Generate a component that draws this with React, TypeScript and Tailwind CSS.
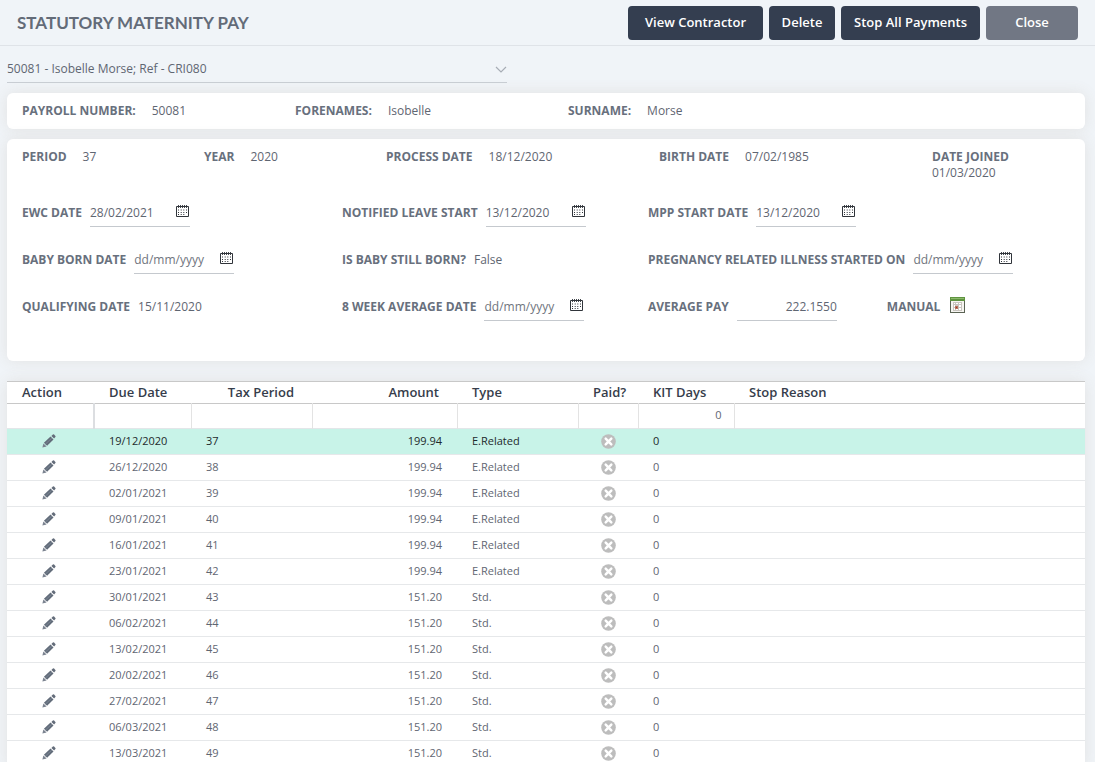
import React, { useState } from 'react';

interface Payment {
  due: string;
  period: number;
  amount: string;
  type: string;
}

const payments: Payment[] = [
  { due: '19/12/2020', period: 37, amount: '199.94', type: 'E.Related' },
  { due: '26/12/2020', period: 38, amount: '199.94', type: 'E.Related' },
  { due: '02/01/2021', period: 39, amount: '199.94', type: 'E.Related' },
  { due: '09/01/2021', period: 40, amount: '199.94', type: 'E.Related' },
  { due: '16/01/2021', period: 41, amount: '199.94', type: 'E.Related' },
  { due: '23/01/2021', period: 42, amount: '199.94', type: 'E.Related' },
  { due: '30/01/2021', period: 43, amount: '151.20', type: 'Std.' },
  { due: '06/02/2021', period: 44, amount: '151.20', type: 'Std.' },
  { due: '13/02/2021', period: 45, amount: '151.20', type: 'Std.' },
  { due: '20/02/2021', period: 46, amount: '151.20', type: 'Std.' },
  { due: '27/02/2021', period: 47, amount: '151.20', type: 'Std.' },
  { due: '06/03/2021', period: 48, amount: '151.20', type: 'Std.' },
  { due: '13/03/2021', period: 49, amount: '151.20', type: 'Std.' },
];

const labelClass = 'text-[12px] leading-4 font-bold whitespace-nowrap text-[#68707d]';
const cardShadow = 'shadow-[0_0_15px_#e2e2e2]';

const CalendarIcon: React.FC = () => (
  <svg width="14" height="13" viewBox="0 0 14 13" aria-hidden="true">
    <path d="M0.5 1.5h12v10h-12z" fill="none" stroke="#30343a" />
    <path d="M2.5 0v3M4.5 0v3M6.5 0v3M8.5 0v3M10.5 0v3" stroke="#30343a" strokeWidth="0.9" />
    <path
      d="M2 4.5h1v1h-1zM4.7 4.5h1v1h-1zM7.3 4.5h1v1h-1zM10 4.5h1v1h-1zM2 7h1v1h-1zM4.7 7h1v1h-1zM7.3 7h1v1h-1zM10 7h1v1h-1zM2 9h1v1h-1zM4.7 9h1v1h-1zM7.3 9h1v1h-1z"
      fill="#30343a"
    />
  </svg>
);

const ManualIcon: React.FC = () => (
  <svg width="15" height="16" viewBox="0 0 15 16" shapeRendering="crispEdges" aria-hidden="true">
    <path d="M0 0h15v16h-15z" fill="#5b6354" />
    <path d="M1 4h13v11h-13z" fill="#f6f5f1" />
    <path d="M0 0h15v4h-15z" fill="#5f9440" />
    <path d="M1 1h13v1h-13z" fill="#8dbb6c" />
    <path d="M3 5h9v9h-9z" fill="#c9c5bf" />
    <path d="M4 6h1v1h-1zM6 6h2v1h-2zM9 6h2v1h-2zM4 8h1v2h-1zM9 8h2v2h-2zM4 11h1v2h-1zM6 11h2v2h-2zM9 11h2v2h-2z" fill="#fff" />
    <path d="M5 9h3v3h-3z" fill="#b9705c" />
    <path d="M6 10h1v1h-1z" fill="#a13a24" />
  </svg>
);

const PencilIcon: React.FC = () => (
  <svg width="14" height="14" viewBox="0 0 14 14" aria-hidden="true">
    <path d="M0.4 13.6l1-4.2 3.2 3.2z" fill="#7b8390" />
    <path d="M1.9 8.7l6.6-6.1 3 3-6.4 6.2z" fill="#626c7a" />
    <path d="M9.4 1.9l1.5-1.3q.6-.5 1.2 0l1.3 1.3q.5.6 0 1.2l-1.3 1.5z" fill="#626b79" />
    <path d="M3.2 10.3l6.6-6.2" stroke="#818b99" strokeWidth="0.8" />
  </svg>
);

const CrossIcon: React.FC = () => (
  <svg width="15" height="15" viewBox="0 0 15 15" role="img" aria-label="No">
    <circle cx="7.5" cy="7.5" r="7.3" fill="#bdbdbd" />
    <path d="M4.7 4.7l5.6 5.6M10.3 4.7l-5.6 5.6" stroke="#fff" strokeWidth="2.5" strokeLinecap="round" />
  </svg>
);

interface ValueProps {
  label: string;
  value: string;
  gap?: string;
}

const Value: React.FC<ValueProps> = ({ label, value, gap = 'gap-x-2' }) => (
  <dl className={`flex flex-wrap items-start ${gap}`}>
    <dt className={labelClass}>{label}</dt>
    <dd className="leading-4">{value}</dd>
  </dl>
);

interface DateFieldProps {
  id: string;
  label: string;
  initial?: string;
}

const DateField: React.FC<DateFieldProps> = ({ id, label, initial = '' }) => {
  const [value, setValue] = useState(initial);

  return (
    <div className="flex items-start gap-2">
      <label htmlFor={id} className={labelClass}>{label}</label>
      <div className="flex h-[22px] w-[100px] items-start border-b border-[#c5c9ce]">
        <input
          id={id}
          type="text"
          placeholder="dd/mm/yyyy"
          value={value}
          onChange={(e) => setValue(e.target.value)}
          className="h-4 w-full min-w-0 bg-transparent outline-none placeholder:text-[#70757e]"
        />
        <button type="button" aria-label={`Pick ${label.toLowerCase()}`} className="shrink-0">
          <CalendarIcon />
        </button>
      </div>
    </div>
  );
};

const headerButton = 'h-[34px] rounded text-[13px] leading-5 font-semibold text-white whitespace-nowrap pb-0.5';

const App: React.FC = () => {
  const [selected, setSelected] = useState(0);

  return (
    <div className="h-screen overflow-hidden bg-[#f0f4f8] font-['Open_Sans',sans-serif] text-[12px] text-[#5f6672]">
      <header className="flex h-[46px] items-center justify-between border-b border-[#dfe3e8] pr-[17px] pl-[17px]">
        <h1 className="font-['Lato',sans-serif] text-[17px] font-bold text-[#636b78]">STATUTORY MATERNITY PAY</h1>
        <div className="flex gap-1.5">
          <button type="button" className={`${headerButton} w-[135px] bg-[#343e50]`}>View Contractor</button>
          <button type="button" className={`${headerButton} w-[66px] bg-[#343e50]`}>Delete</button>
          <button type="button" className={`${headerButton} w-[139px] bg-[#343e50]`}>Stop All Payments</button>
          <button type="button" className={`${headerButton} w-[92px] bg-[#717784]`}>Close</button>
        </div>
      </header>

      <main className="pt-2.5 pr-2.5 pl-[7px]">
        <div className="relative w-[500px] border-b border-[#c8cdd3]">
          <select
            aria-label="Contractor"
            className="block h-[26px] w-full appearance-none bg-transparent outline-none"
          >
            <option>50081 - Isobelle Morse; Ref - CRI080</option>
          </select>
          <svg className="pointer-events-none absolute top-2.5 right-0" width="12" height="7" viewBox="0 0 12 7" aria-hidden="true">
            <path d="M1 1l5 5 5-5" fill="none" stroke="#a7adb5" strokeWidth="1.2" />
          </svg>
        </div>

        <section className={`mt-2.5 grid grid-cols-[273fr_273fr_502fr] rounded-md bg-white px-[15px] py-2.5 ${cardShadow}`}>
          <Value label="PAYROLL NUMBER:" value="50081" gap="gap-x-4" />
          <Value label="FORENAMES:" value="Isobelle" gap="gap-x-4" />
          <Value label="SURNAME:" value="Morse" gap="gap-x-4" />
        </section>

        <section className={`mt-2.5 rounded-md bg-white px-[15px] pt-2.5 pb-10 ${cardShadow}`}>
          <div className="grid grid-cols-[182fr_182fr_273fr_273fr_138fr]">
            <Value label="PERIOD" value="37" gap="gap-x-4" />
            <Value label="YEAR" value="2020" gap="gap-x-4" />
            <Value label="PROCESS DATE" value="18/12/2020" gap="gap-x-4" />
            <Value label="BIRTH DATE" value="07/02/1985" gap="gap-x-4" />
            <Value label="DATE JOINED" value="01/03/2020" gap="gap-x-4" />
          </div>
          <div className="mt-6 grid grid-cols-[320fr_306fr_422fr] gap-y-[25px]">
            <DateField id="ewc" label="EWC DATE" initial="28/02/2021" />
            <DateField id="leave" label="NOTIFIED LEAVE START" initial="13/12/2020" />
            <DateField id="mpp" label="MPP START DATE" initial="13/12/2020" />
            <DateField id="born" label="BABY BORN DATE" />
            <Value label="IS BABY STILL BORN?" value="False" />
            <DateField id="illness" label="PREGNANCY RELATED ILLNESS STARTED ON" />
            <Value label="QUALIFYING DATE" value="15/11/2020" />
            <DateField id="average" label="8 WEEK AVERAGE DATE" />
            <div className="flex items-start">
              <label htmlFor="pay" className={labelClass}>AVERAGE PAY</label>
              <input
                id="pay"
                type="text"
                defaultValue="222.1550"
                className="ml-2 h-[22px] w-[100px] border-b border-[#c5c9ce] bg-transparent pb-1.5 text-right outline-none"
              />
              <span className={`${labelClass} ml-[50px]`}>MANUAL</span>
              <button type="button" aria-label="Manual calculation" className="-mt-0.5 ml-2.5">
                <ManualIcon />
              </button>
            </div>
          </div>
        </section>

        <div className={`mt-5 border-t border-[#c8c8c8] bg-white ${cardShadow}`}>
          <table className="w-full table-fixed border-collapse text-[11px]">
            <colgroup>
              <col className="w-[87px]" />
              <col className="w-[97px]" />
              <col className="w-[121px]" />
              <col className="w-[145px]" />
              <col className="w-[121px]" />
              <col className="w-[60px]" />
              <col className="w-[96px]" />
              <col />
            </colgroup>
            <thead>
              <tr className="h-[21px] border-b border-[#c8c8c8] text-left text-[13px] leading-4 text-[#363d4b]">
                <th className="pl-[15px] font-semibold">Action</th>
                <th className="pl-[15px] font-semibold">Due Date</th>
                <th className="pr-[18px] text-right font-semibold">Tax Period</th>
                <th className="pr-[18px] text-right font-semibold">Amount</th>
                <th className="pl-[15px] font-semibold">Type</th>
                <th className="pl-[15px] font-semibold">Paid?</th>
                <th className="pl-[15px] font-semibold">KIT Days</th>
                <th className="pl-[15px] font-semibold">Stop Reason</th>
              </tr>
              <tr className="h-[25px] border-b border-[#e3e6e9] text-left">
                <td className="border-r-2 border-[#dcdee1]" />
                <td className="border-r border-[#e3e3e3]"><input aria-label="Filter due date" className="block w-full px-3 outline-none" /></td>
                <td className="border-r border-[#e3e3e3]"><input aria-label="Filter tax period" className="block w-full px-3 outline-none" /></td>
                <td className="border-r border-[#e3e3e3]"><input aria-label="Filter amount" className="block w-full px-3 outline-none" /></td>
                <td className="border-r border-[#e3e3e3]"><input aria-label="Filter type" className="block w-full px-3 outline-none" /></td>
                <td className="border-r border-[#e3e3e3]" />
                <td className="border-r border-[#e3e3e3]">
                  <input aria-label="Filter KIT days" defaultValue="0" className="block w-full px-3 text-right outline-none" />
                </td>
                <td><input aria-label="Filter stop reason" className="block w-full px-3 outline-none" /></td>
              </tr>
            </thead>
            <tbody>
              {payments.map((p, i) => (
                <tr
                  key={p.due}
                  onClick={() => setSelected(i)}
                  className={`h-[26px] border-b border-[#e6e8ea] leading-4 ${i === selected ? 'bg-[#c8f3e8] text-[#1d2a2c]' : ''}`}
                >
                  <td className="pl-[35px]">
                    <button type="button" aria-label={`Edit ${p.due}`} className="block"><PencilIcon /></button>
                  </td>
                  <td className="pl-[15px]">{p.due}</td>
                  <td className="pl-[15px]">{p.period}</td>
                  <td className="pr-[15px] text-right">{p.amount}</td>
                  <td className="pl-[15px]">{p.type}</td>
                  <td><div className="flex justify-center"><CrossIcon /></div></td>
                  <td className="pl-[15px]">0</td>
                  <td />
                </tr>
              ))}
            </tbody>
          </table>
        </div>
      </main>
    </div>
  );
};

export default App;
